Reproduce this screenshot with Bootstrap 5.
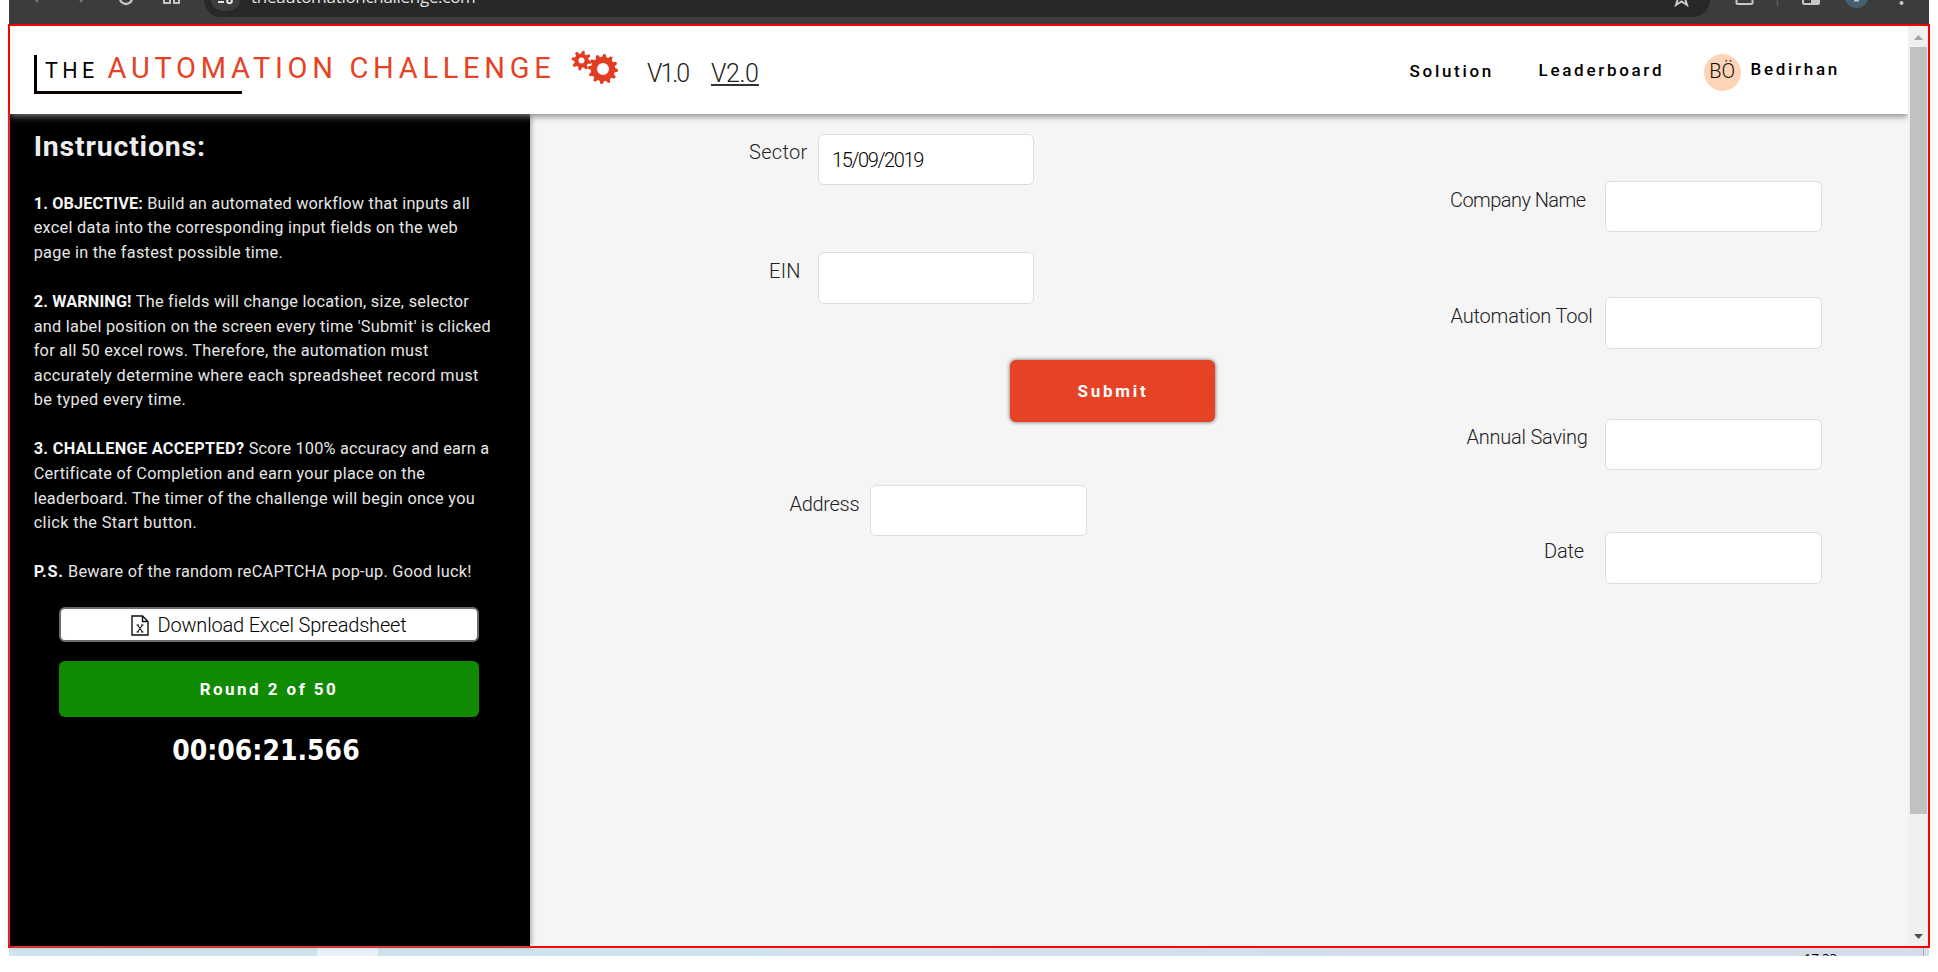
<!DOCTYPE html>
<html lang="en">
<head>
<meta charset="utf-8">
<meta name="viewport" content="width=device-width, initial-scale=1">
<title>The Automation Challenge</title>
<link href="https://cdn.jsdelivr.net/npm/bootstrap@5.3.0/dist/css/bootstrap.min.css" rel="stylesheet">
<script src="https://cdn.jsdelivr.net/npm/bootstrap@5.3.0/dist/js/bootstrap.bundle.min.js"></script>
<style>
body{font-family:Roboto,"Liberation Sans",sans-serif;background:#fff;color:#000;height:972px}
.screen{width:1922px;margin-left:8px}
/* browser toolbar */
.toolbar{height:24px;margin:0 1px;background:#3c3c3c}
.omnibox{width:1506px;height:17px;margin-left:195px;background:#282828;border-radius:0 0 22px 22px}
.site-info{width:29px;height:11px;margin-left:7px;background:#3c3c3c;border-radius:0 0 15px 15px/0 0 11px 11px}
.url{font:17px/24px "Open Sans",sans-serif;letter-spacing:-.3px;color:#e3e3e3;margin:-15px 0 0 11px;white-space:nowrap}
/* page frame */
.viewport-frame{height:924px;border:2px solid #f00}
.site-header{height:88px;background:#fff;box-shadow:0 2px 7px #808080;z-index:2;padding-left:24px;white-space:nowrap;clip-path:inset(0 0 -14px 0)}
.brand-box{width:208px;height:39px;margin-top:29px;border-left:3px solid #000;border-bottom:3px solid #100000;padding-left:8px;line-height:27px}
.brand-the{font-size:21.5px;letter-spacing:4.4px}
.brand-name{font-size:29px;letter-spacing:4.72px;color:#e64226;margin-left:5px}
.gears{margin:20px 0 0 327px}
.ver{font-size:25px;font-weight:300;line-height:30px;color:#222;margin-top:33px;height:27px}
.v-one{letter-spacing:-2px;margin-left:26px;width:64px}
.v-two{letter-spacing:-.4px;width:48px;border-bottom:2px solid #333}
.top-link{font-size:17px;line-height:24px;font-weight:500;color:#000;letter-spacing:2.7px}
.link-solution{margin-top:33px;width:129px}
.link-board{margin-top:32px;width:165px}
.link-user{margin:31px 68px 0 10px}
.avatar{width:37px;height:37px;margin-top:28px;background:#ffd3b5;font-size:20px;line-height:34px;font-weight:300;color:#111}
/* instructions */
.side{width:520px;background:#000;color:#eee;padding:16px 0 0 23.7px;box-shadow:1px 0 5px #9a9a9a;z-index:1}
.side h1{font-size:28.5px;line-height:34px;font-weight:700;letter-spacing:.8px;margin:0 0 27.8px}
.side p{font-size:16.3px;line-height:24.57px;letter-spacing:.28px;margin:0 0 24.57px;white-space:nowrap;color:#e6e6e6}
.side b{color:#f5f5f5;letter-spacing:.12px}
.side .lead-in{letter-spacing:.22px}
.side .tighter{letter-spacing:.26px}
.side .looser{letter-spacing:.39px}
.side b.ps{letter-spacing:.75px}
.side b.acc{letter-spacing:.32px}
.side-btn{width:420px;margin-left:25.3px;border-radius:6px}
.download{height:35px;background:#fff;border:2px solid #6c6c6c;color:#000;font-size:20px;font-weight:300;letter-spacing:-.18px;margin-top:-2.6px;padding-top:2px}
.round{height:56px;margin-top:19px;padding-top:2px;background:#118a04;color:#fff;font-size:17px;font-weight:700;letter-spacing:2.45px}
.timer{font:700 28px/34px "DejaVu Sans Condensed","DejaVu Sans",sans-serif;font-stretch:condensed;color:#fff;margin:17px 0 0 138.5px}
/* form */
.board{background:#f5f5f5}
.col-b{padding-right:86px}
.lbl{font-size:20px;font-weight:300;line-height:24px;color:#222;margin-top:7px;white-space:nowrap}
.field .form-control{width:217px;height:52px;border:1px solid #ddd;border-radius:6px;padding:0 0 0 13px;font-size:20px;font-weight:300;letter-spacing:-1.38px;color:#000;background:#fff}
.field.h51 .form-control{height:51px}
.field.w216 .form-control{width:216px}
.submit{width:205px;height:62px;background:#e64226;color:#fff;border:0;border-radius:6px;font-size:17px;font-weight:700;letter-spacing:2.75px;box-shadow:0 0 4px rgba(0,0,0,.6);margin:56px 0 0 479.5px;padding:2px 0 0 2px}
.a1{margin:20px 0 0 219px}.a1 .lbl{width:69px;letter-spacing:.3px;margin-top:6px}
.a2{margin:67px 0 0 239px}.a2 .lbl{width:49px;letter-spacing:.3px}
.a3{margin:63px 0 0 259.5px}.a3 .lbl{width:80.5px;letter-spacing:-.31px}
.b1{margin-top:67px}.b1 .lbl{width:155px;letter-spacing:-.56px}
.b2{margin-top:65px}.b2 .lbl{width:154.5px;letter-spacing:-.18px}
.b3{margin-top:70px}.b3 .lbl{width:138.5px;letter-spacing:-.23px;margin-top:6px}
.b4{margin-top:62px}.b4 .lbl{width:61px;letter-spacing:-.2px}
/* scrollbar */
.sbar{width:20px;background:#f0f0f0;padding:9px 1px 7px 2px;height:920px}
.sbar .thumb{width:17px;height:767px;background:#c1c1c1;margin-top:7px}
/* taskbar */
.task{height:8px;margin:0 1px;background:linear-gradient(90deg,#cde5ed,#d0e3ec 45%,#d4dcea 75%)}
.task .active-app{width:61px;height:8px;margin-left:308px;background:#e9f3f7}
.clock{height:2px;width:34px;margin:0 85px 0 auto;align-self:end;overflow:hidden;font:13px/8px "Open Sans",sans-serif;color:#000}
.tray-end{width:1px;height:8px;background:#a3acbb;margin-right:5px}
</style>
</head>
<body>
<div class="screen">
  <div class="toolbar d-flex position-relative">
    <svg class="position-absolute start-0 top-0 z-1" width="1920" height="24" fill="none" stroke-width="2">
      <path d="M24-3l5 5M71 2l5-5" stroke="#777"/>
      <path d="M111-2a6 6 0 0 0 12 0" stroke="#c4c4c4" stroke-width="2.400"/>
      <path d="M155-3V3H161V-3M165-3V3H170V-3" stroke="#c4c4c4"/>
      <path d="M209 2h6" stroke="#e3e3e3"/><circle cx="220.500" cy="1" r="2.300" stroke="#e3e3e3"/>
      <path d="M1667-4l1.500 4-1.500 5 5.500-3.500 5.500 3.500-1.500-5 1.500-4z" stroke="#c8c8c8"/>
      <path d="M1727.500-3V2.500q0 1.500 1.500 1.500h13q1.500 0 1.500-1.500V-3" stroke="#c8c8c8"/>
      <path d="M1768.500 0v6" stroke="#5c5c5c" stroke-width="1.500"/>
      <path d="M1794-3V2.500q0 1.500 1.500 1.500h13q1.500 0 1.500-1.500V-3" stroke="#c8c8c8"/><path d="M1802 0h8v4h-8z" fill="#c8c8c8"/>
      <circle cx="1847.500" cy="-4" r="12" fill="#45606e"/><path d="M1845 .5h5" stroke="#bcc8ce"/>
      <circle cx="1892.500" cy="3" r="2" fill="#c8c8c8"/>
    </svg>
    <div class="omnibox d-flex"><div class="site-info"></div><div class="url">theautomationchallenge.com</div></div>
  </div>

  <div class="viewport-frame d-flex">
    <div class="d-flex flex-column flex-grow-1">
      <header class="site-header d-flex position-relative">
        <div class="brand-box"><span class="brand-the">THE</span> <span class="brand-name">AUTOMATION CHALLENGE</span></div>
        <svg class="gears flex-shrink-0" width="52" height="52" viewBox="569 46 52 52" id="gears"></svg>
        <div class="ver v-one">V1.0</div>
        <div class="ver v-two">V2.0</div>
        <nav class="d-flex ms-auto">
          <span class="top-link link-solution">Solution</span>
          <span class="top-link link-board">Leaderboard</span>
          <span class="avatar rounded-circle text-center">BÖ</span>
          <span class="top-link link-user">Bedirhan</span>
        </nav>
      </header>
      <div class="d-flex flex-grow-1">
        <aside class="side position-relative">
          <h1>Instructions:</h1>
          <p><b>1. OBJECTIVE:</b> <span class="lead-in">Build an automated workflow that inputs all</span><br>excel data into the corresponding input fields on the web<br>page in the fastest possible time.</p>
          <p><b>2. WARNING!</b> The fields will change location, size, selector<br><span class="tighter">and label position on the screen every time 'Submit' is clicked<br>for all 50 excel rows. Therefore, the automation must</span><br><span class="looser">accurately determine where each spreadsheet record must<br>be typed every time.</span></p>
          <p><b class="acc">3. CHALLENGE ACCEPTED?</b> <span class="lead-in">Score 100% accuracy and earn a</span><br>Certificate of Completion and earn your place on the<br>leaderboard. The timer of the challenge will begin once you<br><span class="looser">click the Start button.</span></p>
          <p><b class="ps">P.S.</b> <span class="tighter">Beware of the random reCAPTCHA pop-up. Good luck!</span></p>
          <div class="side-btn download d-flex align-items-center justify-content-center">
            <svg class="me-2" width="18" height="21" viewBox="0 0 18 21" fill="none" stroke="#111" stroke-width="1.400"><path d="M1 1h10.500L17 6.500V20H1zM11.500 1v5.500H17"/><path d="M6.500 10l5 7M11.500 10l-5 7M5.500 10h2.500M10 10h2.500M5.500 17h2.500M10 17h2.500" stroke-width="1.100"/></svg>
            <span>Download Excel Spreadsheet</span>
          </div>
          <div class="side-btn round d-flex align-items-center justify-content-center">Round 2 of 50</div>
          <div class="timer">00:06:21.566</div>
        </aside>
        <main class="board d-flex justify-content-between flex-grow-1">
          <div>
            <div class="field h51 w216 d-flex a1"><label class="lbl">Sector</label><input class="form-control" value="15/09/2019"></div>
            <div class="field w216 d-flex a2"><label class="lbl">EIN</label><input class="form-control"></div>
            <button class="submit d-block">Submit</button>
            <div class="field h51 d-flex a3"><label class="lbl">Address</label><input class="form-control"></div>
          </div>
          <div class="col-b">
            <div class="field h51 d-flex justify-content-end b1"><label class="lbl">Company Name</label><input class="form-control"></div>
            <div class="field d-flex justify-content-end b2"><label class="lbl">Automation Tool</label><input class="form-control"></div>
            <div class="field h51 d-flex justify-content-end b3"><label class="lbl">Annual Saving</label><input class="form-control"></div>
            <div class="field d-flex justify-content-end b4"><label class="lbl">Date</label><input class="form-control"></div>
          </div>
        </main>
      </div>
    </div>
    <div class="sbar d-flex flex-column align-items-center">
      <svg width="9" height="5"><path d="M0 5L4.500 0 9 5z" fill="#a3a3a3"/></svg>
      <div class="thumb"></div>
      <svg class="mt-auto" width="9" height="5"><path d="M0 0L4.500 5 9 0z" fill="#505050"/></svg>
    </div>
  </div>

  <div class="task d-flex">
    <div class="active-app"></div>
    <div class="clock">17:33</div>
    <div class="tray-end"></div>
  </div>
</div>
<script>
// toothed wheel outline with a round hole
function gear(cx,cy,n,ro,ri,hole,rot){
  let d='';
  for(let i=0;i<n;i++){
    [[-.34,ri],[-.15,ro],[.15,ro],[.34,ri]].forEach(([o,r],k)=>{
      const a=(i+o)*2*Math.PI/n+rot;
      d+=(i||k?'L':'M')+(cx+r*Math.cos(a)).toFixed(2)+' '+(cy+r*Math.sin(a)).toFixed(2);
    });
  }
  return `<path fill="#e23d20" fill-rule="evenodd" d="${d}ZM${cx-hole} ${cy}a${hole} ${hole} 0 1 0 ${2*hole} 0a${hole} ${hole} 0 1 0 ${-2*hole} 0Z"/>`;
}
document.getElementById('gears').innerHTML=gear(581.5,60.6,8,10,7.2,3,.2)+gear(603,69,12,15,12.2,6,.1);
</script>
</body>
</html>
